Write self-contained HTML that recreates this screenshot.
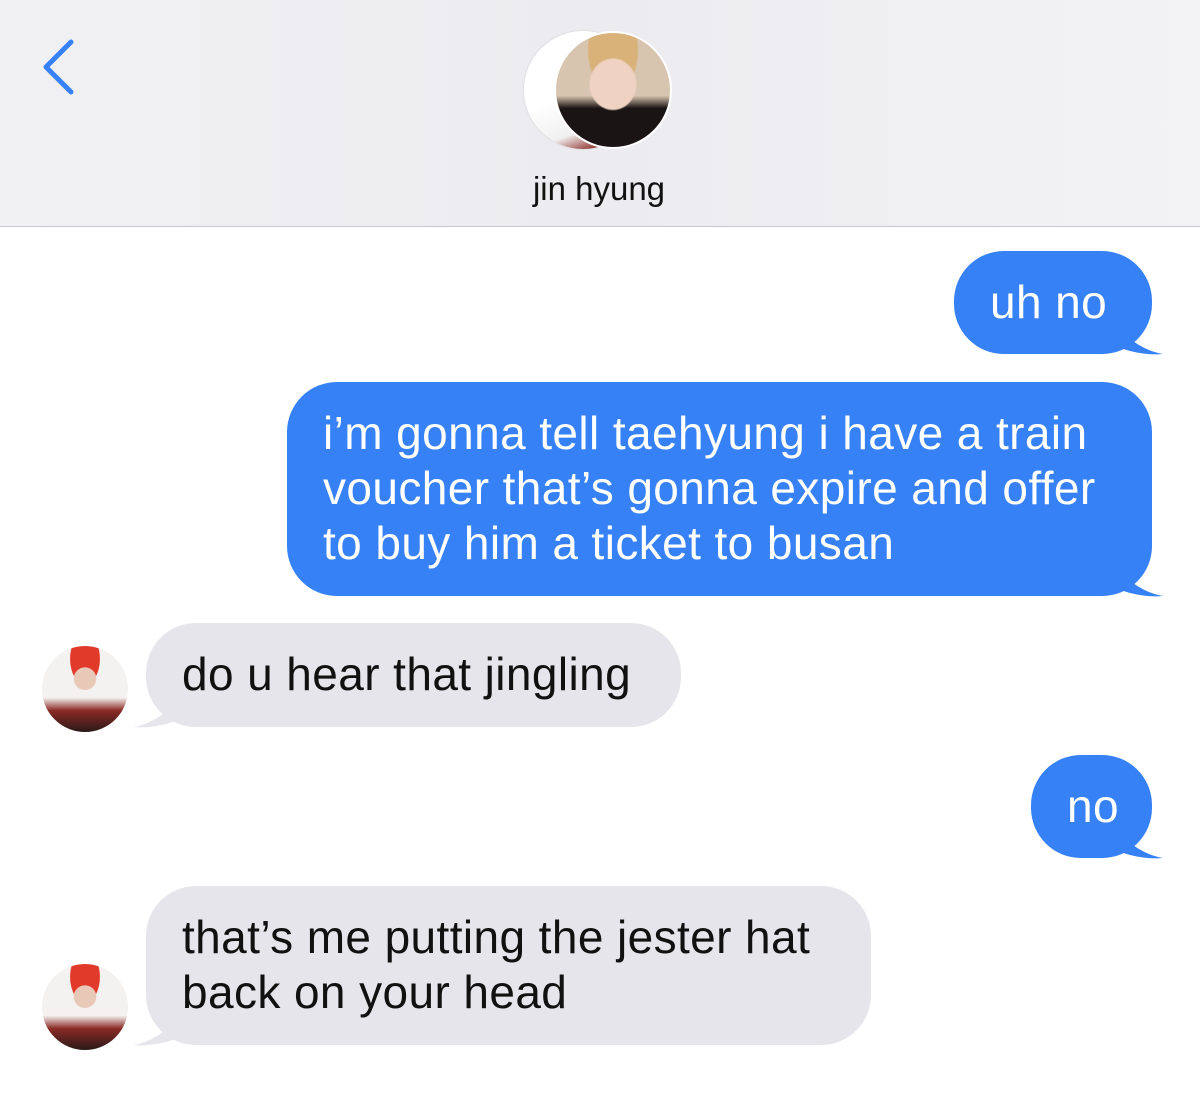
<!DOCTYPE html>
<html><head><meta charset="utf-8"><style>
body{margin:0;width:1200px;height:1104px;background:#fff;font-family:"Liberation Sans",sans-serif;position:relative;overflow:hidden}
.hdr{position:absolute;left:0;top:0;width:1200px;height:226px;background:linear-gradient(90deg,#f1f1f3,#ececf0 50%,#f3f3f5);border-bottom:1px solid #c8c8cc}
.name{position:absolute;top:170px;left:0;width:1198px;text-align:center;font-size:33px;color:#111}
.b{position:absolute;box-sizing:border-box;font-size:46px;letter-spacing:0.4px;line-height:55px;white-space:nowrap;border-radius:50px;padding-left:36px}
.me{background:#3781f6;color:#fff}
.th{background:#e6e5eb;color:#111}
.av{position:absolute;width:86px;height:86px;border-radius:50%;background:radial-gradient(circle at 50% 38%,#e8c9b8 0 16%,transparent 17%),radial-gradient(ellipse at 50% 15%,#e23a2a 0 24%,transparent 25%),linear-gradient(180deg,#f4f2f0 60%,#8a2a25 75%,#2a1a1a);border:2px solid #fff}
</style></head><body>
<div class="hdr">
<svg style="position:absolute;left:38px;top:38px" width="40" height="58"><path d="M33 4 L8 29 L33 54" fill="none" stroke="#3781f6" stroke-width="5" stroke-linecap="round" stroke-linejoin="round"/></svg>
<div style="position:absolute;left:524px;top:31px;width:118px;height:118px;border-radius:50%;background:linear-gradient(160deg,#fff 50%,#f0f0f0 75%,#8b2a25 90%);box-shadow:0 0 2px #ccc"></div>
<div style="position:absolute;left:554px;top:31px;width:118px;height:118px;border-radius:50%;border:2px solid #fff;box-sizing:border-box;background:radial-gradient(ellipse at 50% 45%,#efd2c2 0 28%,transparent 30%),radial-gradient(ellipse at 50% 15%,#d9b27a 0 30%,transparent 32%),linear-gradient(180deg,#d8c5b0 55%,#1a1414 66%)"></div>
<div class="name">jin hyung</div>
</div>
<svg width="1200" height="1104" style="position:absolute;left:0;top:0">
<path d="M1120 330 Q1140 350 1163 354 Q1140 356 1115 346 Z" fill="#3781f6"/>
<path d="M1120 572 Q1140 592 1163 596 Q1140 598 1115 588 Z" fill="#3781f6"/>
<path d="M1120 834 Q1140 854 1163 858 Q1140 860 1115 850 Z" fill="#3781f6"/>
<path d="M176 703 Q156 723 134 727 Q156 729 181 719 Z" fill="#e6e5eb"/>
<path d="M176 1021 Q156 1041 134 1045 Q156 1047 181 1037 Z" fill="#e6e5eb"/>
</svg>
<div class="b me" style="left:954px;top:251px;width:198px;height:103px;padding-top:24px">uh no</div>
<div class="b me" style="left:287px;top:382px;width:865px;height:214px;padding-top:24px">i’m gonna tell taehyung i have a train<br>voucher that’s gonna expire and offer<br>to buy him a ticket to busan</div>
<div class="b th" style="left:146px;top:623px;width:535px;height:104px;padding-top:24px">do u hear that jingling</div>
<div class="b me" style="left:1031px;top:755px;width:121px;height:103px;padding-top:24px">no</div>
<div class="b th" style="left:146px;top:886px;width:725px;height:159px;padding-top:24px">that’s me putting the jester hat<br>back on your head</div>
<div class="av" style="left:40px;top:644px"></div>
<div class="av" style="left:40px;top:962px"></div>
</body></html>
